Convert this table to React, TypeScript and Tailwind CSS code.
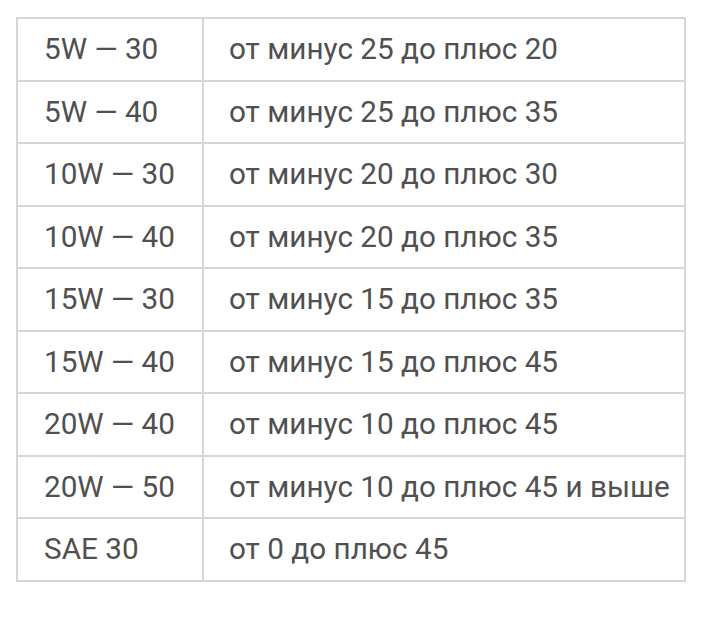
const rows: [string, string][] = [
  ['5W — 30', 'от минус 25 до плюс 20'],
  ['5W — 40', 'от минус 25 до плюс 35'],
  ['10W — 30', 'от минус 20 до плюс 30'],
  ['10W — 40', 'от минус 20 до плюс 35'],
  ['15W — 30', 'от минус 15 до плюс 35'],
  ['15W — 40', 'от минус 15 до плюс 45'],
  ['20W — 40', 'от минус 10 до плюс 45'],
  ['20W — 50', 'от минус 10 до плюс 45 и выше'],
  ['SAE 30', 'от 0 до плюс 45'],
];

export default function App() {
  return (
    <div className="w-[720px] h-[630px] bg-white pt-[17px] pl-[16px] font-['Roboto',sans-serif] text-[29.7px] text-[#505050]">
      <table className="border-collapse border-2 border-[#d6d6d6] w-[670px]">
        <tbody>
          {rows.map(([grade, range]) => (
            <tr key={grade} className="h-[62.5px]">
              <td className="w-[186px] border-2 border-[#d6d6d6] pl-[26px] py-0 leading-none">{grade}</td>
              <td className="border-2 border-[#d6d6d6] pl-[25px] py-0 leading-none">{range}</td>
            </tr>
          ))}
        </tbody>
      </table>
    </div>
  );
}
